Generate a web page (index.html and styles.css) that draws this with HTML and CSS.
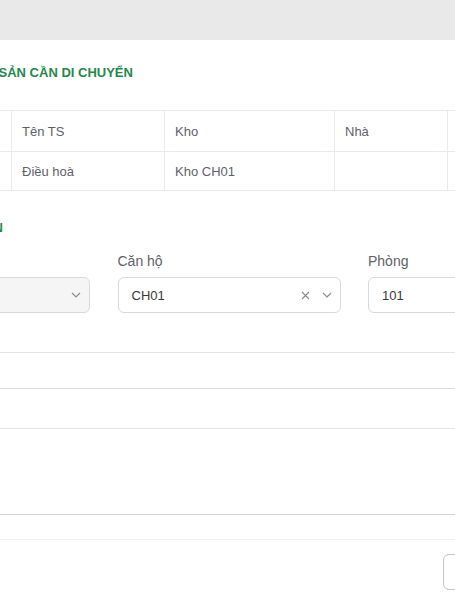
FILE: index.html
```html
<!DOCTYPE html>
<html lang="vi">
<head>
<meta charset="utf-8">
<title>Di chuyển tài sản</title>
<link rel="stylesheet" href="styles.css">
</head>
<body>
<div class="topbar"></div>
<div class="page">
  <div class="title title-1">TÀI SẢN CẦN DI CHUYỂN</div>

  <div class="table">
    <div class="row head">
      <div class="cell">Mã TS</div>
      <div class="cell">Tên TS</div>
      <div class="cell">Kho</div>
      <div class="cell">Nhà</div>
      <div class="cell">Căn hộ</div>
    </div>
    <div class="row body">
      <div class="cell">TS01</div>
      <div class="cell">Điều hoà</div>
      <div class="cell">Kho CH01</div>
      <div class="cell"></div>
      <div class="cell">CH01</div>
    </div>
  </div>

  <div class="title title-2"><span>VỊ TRÍ DI CHUYỂN ĐẾN</span></div>

  <div class="form-grid">
    <div class="field">
      <div class="label">Nhà</div>
      <div class="select disabled">
        <span class="value"></span>
        <svg class="chev" viewBox="0 0 10 6" width="10" height="6"><polyline points="1,1 5,5 9,1"/></svg>
      </div>
    </div>
    <div class="field">
      <div class="label">Căn hộ</div>
      <div class="select">
        <span class="value">CH01</span>
        <svg class="clear" viewBox="0 0 9 9" width="9" height="9"><path d="M1 1 L8 8 M8 1 L1 8"/></svg>
        <svg class="chev" viewBox="0 0 10 6" width="10" height="6"><polyline points="1,1 5,5 9,1"/></svg>
      </div>
    </div>
    <div class="field">
      <div class="label">Phòng</div>
      <div class="select">
        <span class="value">101</span>
      </div>
    </div>
  </div>

  <div class="wide-input"></div>
  <div class="wide-textarea"></div>

  <div class="footer">
    <button class="btn" type="button">Hủy</button>
  </div>
</div>
</body>
</html>
```

FILE: styles.css
```css
html, body {
  margin: 0;
  padding: 0;
  overflow: hidden;
  background: #ffffff;
}

body {
  width: 455px;
  height: 600px;
  font-family: "Liberation Sans", Arial, sans-serif;
  color: #5f5f69;
}

.topbar {
  height: 40px;
  background: #e9e9e9;
}

.page {
  margin-left: -133px;
  width: 1000px;
}

.title {
  font-size: 13px;
  font-weight: bold;
  line-height: 16px;
  color: #22894b;
  white-space: nowrap;
}

.title-1 {
  margin-top: 25px;
  padding-left: 107px;
}

.title-2 {
  margin-top: 29px;
  width: 136px;
  display: flex;
  justify-content: flex-end;
}

.table {
  margin-top: 29px;
  border-top: 1px solid #e9e9ef;
}

.row {
  display: grid;
  grid-template-columns: 145px 153px 170px 113px 200px;
  border-bottom: 1px solid #e9e9ef;
  font-size: 13px;
}

.row.head { height: 40px; }
.row.body { height: 38px; }

.cell {
  border-right: 1px solid #e9e9ef;
  padding-left: 10px;
  display: flex;
  align-items: center;
  white-space: nowrap;
}

.form-grid {
  margin-top: 14px;
  display: grid;
  grid-template-columns: repeat(3, 223px);
  column-gap: 27.5px;
}

.label {
  font-size: 14px;
  line-height: 22px;
  margin-bottom: 5px;
  color: #5f5f69;
}

.select {
  box-sizing: border-box;
  height: 36px;
  border: 1px solid #d9d9d9;
  border-radius: 6px;
  background: #fff;
  display: flex;
  align-items: center;
  padding: 0 8px 0 13px;
  font-size: 13px;
  color: #3a3a3a;
}

.select.disabled {
  background: #f5f5f5;
}

.value {
  flex: 1;
}

.clear {
  fill: none;
  stroke: #8c8c8c;
  stroke-width: 1.1;
  margin-right: 12px;
}

.chev {
  fill: none;
  stroke: #8c8c8c;
  stroke-width: 1.2;
}

.wide-input {
  margin-top: 39px;
  height: 35px;
  border-top: 1px solid #e2e2e6;
  border-bottom: 1px solid #dedee2;
}

.wide-textarea {
  margin-top: 39px;
  height: 85px;
  border-top: 1px solid #e4e4e8;
  border-bottom: 1px solid #d6d6dd;
}

.footer {
  margin-top: 24px;
  border-top: 1px solid #f0f0f0;
  padding-top: 14px;
  padding-left: 576px;
  display: flex;
}

.btn {
  height: 36px;
  width: 80px;
  border: 1px solid #c4c4c4;
  border-radius: 6px;
  background: #fff;
  font-family: "Liberation Sans", Arial, sans-serif;
  font-size: 13px;
  color: #333;
}
```
